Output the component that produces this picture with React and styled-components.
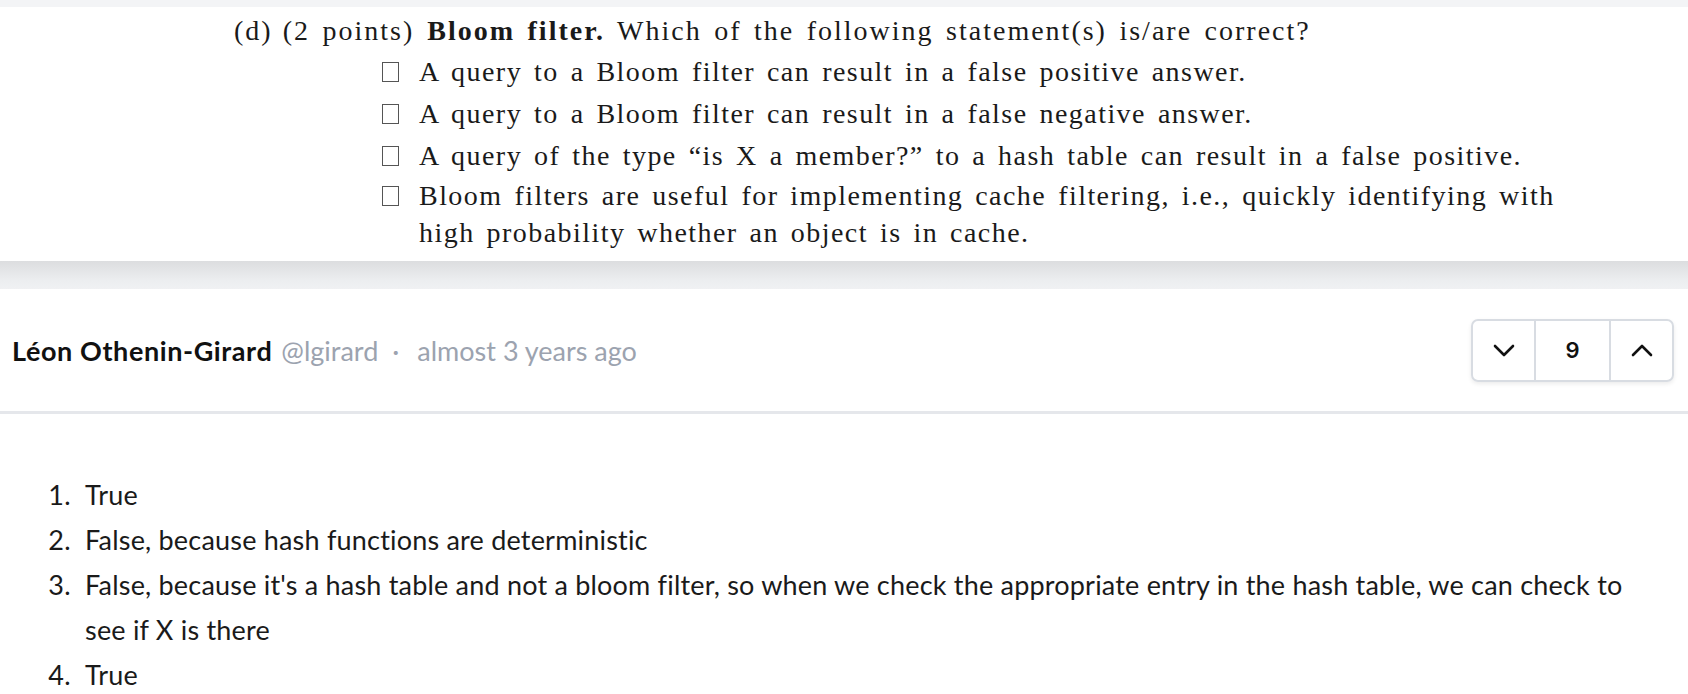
import React from 'react';
import styled, {createGlobalStyle} from 'styled-components';

const GlobalStyle = createGlobalStyle`
  html, body {
    margin: 0;
    padding: 0;
    background: #fff;
  }
  body {
    font-family: Lato, "Noto Sans", sans-serif;
    color: #111;
  }
`;

const Page = styled.div`
  display: flex;
  flex-direction: column;
  width: 1688px;
`;

const TopStrip = styled.div`
  height: 7px;
  background: #f3f4f6;
`;

const Figure = styled.div`
  height: 254px;
  background: #fff;
  font-family: "Liberation Serif", "DejaVu Serif", serif;
  font-size: 28px;
  letter-spacing: 1.45px;
  word-spacing: 3.5px;
  color: #1a1a1a;
  padding-left: 234px;
  box-sizing: border-box;
`;

const QuestionLine = styled.div`
  display: flex;
  align-items: baseline;
  height: 40px;
  line-height: 40px;
  margin-top: 4px;
  letter-spacing: 2px;
  white-space: nowrap;
`;

const Tag = styled.span`
  margin-right: ${p => p.gap || 10}px;
`;

const Bold = styled.b`
  font-weight: 700;
  margin-right: 12px;
`;

const Options = styled.div`
  display: flex;
  flex-direction: column;
  padding-left: 148px;
`;

const Option = styled.div`
  display: flex;
  align-items: flex-start;
  line-height: ${p => (p.$wrap ? 37 : 42)}px;
  width: 1200px;
`;

const Box = styled.span`
  flex: none;
  width: 17px;
  height: 20px;
  border: 1.5px solid #555;
  box-sizing: border-box;
  margin-top: ${p => p.top || 11}px;
  margin-right: 20px;
`;

const OptionText = styled.span`
  white-space: ${p => (p.$wrap ? 'normal' : 'nowrap')};
`;

const Band = styled.div`
  height: 28px;
  background: linear-gradient(#dcdddf, #eceef0 70%, #f0f1f3);
`;

const Header = styled.div`
  height: 125px;
  display: flex;
  align-items: center;
  justify-content: space-between;
  padding: 0 14px 0 12px;
  box-sizing: border-box;
  border-bottom: 3px solid #e5e7eb;
`;

const Meta = styled.div`
  display: flex;
  align-items: baseline;
  font-size: 27px;
`;

const Name = styled.span`
  font-weight: 700;
  letter-spacing: 0.6px;
  color: #111;
  margin-right: 9px;
`;

const Muted = styled.span`
  color: #9ca3af;
  margin-right: ${p => p.gap || 0}px;
`;

const Votes = styled.div`
  display: flex;
  height: 63px;
  border: 2px solid #d8dce2;
  border-radius: 7px;
  box-shadow: 0 2px 4px rgba(0, 0, 0, 0.08);
  box-sizing: border-box;
  overflow: hidden;
`;

const VoteCell = styled.div`
  width: ${p => p.w}px;
  display: flex;
  align-items: center;
  justify-content: center;
  border-left: ${p => (p.first ? 'none' : '2px solid #d8dce2')};
  font-family: Inter, "Noto Sans", sans-serif;
  font-weight: 600;
  font-size: 22px;
  color: #111;
`;

const Body = styled.ol`
  margin: 0;
  padding: 58px 0 0 85px;
  font-size: 27px;
  letter-spacing: 0.2px;
  line-height: 45px;
  color: #1a1a1a;
`;

const Item = styled.li`
  width: 1550px;
  &::marker {
    content: '${p => p.n}.  ';
  }
`;

const Chevron = ({up}) => (
  <svg width="22" height="13" viewBox="0 0 22 13" fill="none">
    <polyline
      points={up ? '2,11 11,2 20,11' : '2,2 11,11 20,2'}
      stroke="#111"
      strokeWidth="2.6"
      strokeLinecap="round"
      strokeLinejoin="round"
    />
  </svg>
);

const options = [
  'A query to a Bloom filter can result in a false positive answer.',
  'A query to a Bloom filter can result in a false negative answer.',
  'A query of the type \u201cis X a member?\u201d to a hash table can result in a false positive.',
];

const answers = [
  'True',
  'False, because hash functions are deterministic',
  "False, because it's a hash table and not a bloom filter, so when we check the appropriate entry in the hash table, we can check to see if X is there",
  'True',
];

export default function App() {
  return (
    <Page>
      <GlobalStyle />
      <TopStrip />
      <Figure>
        <QuestionLine>
          <Tag gap={10}>(d)</Tag>
          <Tag gap={13}>(2 points)</Tag>
          <Bold>Bloom filter.</Bold>
          <span>Which of the following statement(s) is/are correct?</span>
        </QuestionLine>
        <Options>
          {options.map(o => (
            <Option key={o}>
              <Box />
              <OptionText>{o}</OptionText>
            </Option>
          ))}
          <Option $wrap>
            <Box top={9} />
            <OptionText $wrap>
              Bloom filters are useful for implementing cache filtering, i.e., quickly identifying with high
              probability whether an object is in cache.
            </OptionText>
          </Option>
        </Options>
      </Figure>
      <Band />
      <Header>
        <Meta>
          <Name>Léon Othenin-Girard</Name>
          <Muted gap={14}>@lgirard</Muted>
          <Muted gap={18}>·</Muted>
          <Muted>almost 3 years ago</Muted>
        </Meta>
        <Votes>
          <VoteCell w={61} first>
            <Chevron />
          </VoteCell>
          <VoteCell w={73}>9</VoteCell>
          <VoteCell w={61}>
            <Chevron up />
          </VoteCell>
        </Votes>
      </Header>
      <Body>
        {answers.map((a, i) => (
          <Item key={i} n={i + 1}>
            {a}
          </Item>
        ))}
      </Body>
    </Page>
  );
}
